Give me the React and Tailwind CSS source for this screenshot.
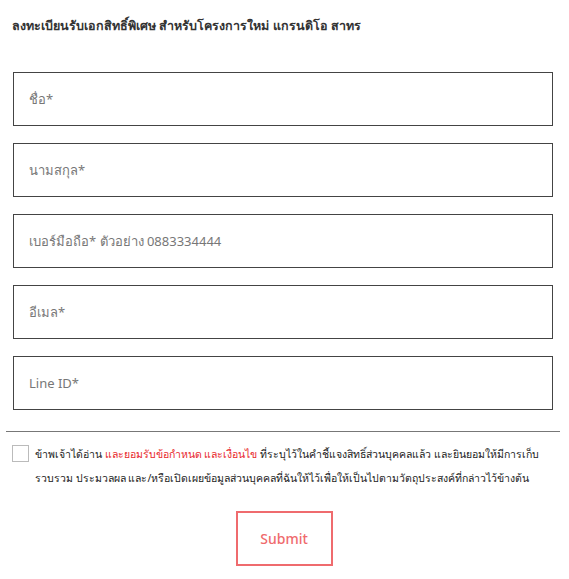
import React, { useState } from "react";

const fields = [
  { name: "firstName", placeholder: "ชื่อ*" },
  { name: "lastName", placeholder: "นามสกุล*" },
  { name: "phone", placeholder: "เบอร์มือถือ* ตัวอย่าง 0883334444" },
  { name: "email", placeholder: "อีเมล*" },
  { name: "lineId", placeholder: "Line ID*" },
];

const App = () => {
  const [values, setValues] = useState({});
  const [accepted, setAccepted] = useState(false);

  const handleChange = (e) =>
    setValues({ ...values, [e.target.name]: e.target.value });

  return (
    <div
      className="w-[569px] bg-white pt-[17px] text-[#333]"
      style={{ fontFamily: '"Noto Sans", "Liberation Sans", sans-serif' }}
    >
      <h1 className="pl-[12px] text-[12.5px] font-bold leading-[18px] text-[#333]">
        ลงทะเบียนรับเอกสิทธิ์พิเศษ สำหรับโครงการใหม่ แกรนดิโอ สาทร
      </h1>

      <form className="mt-[37px]" onSubmit={(e) => e.preventDefault()}>
        <div className="flex flex-col gap-[17px] pl-[13px] pr-[16px]">
          {fields.map((field) => (
            <input
              key={field.name}
              type="text"
              name={field.name}
              value={values[field.name] || ""}
              onChange={handleChange}
              placeholder={field.placeholder}
              className="h-[54px] w-full border border-[#444] px-[15px] text-[13px] text-[#333] placeholder:text-[#777] outline-none"
            />
          ))}
        </div>

        <div className="ml-[6px] mr-[9px] mt-[21px] h-px bg-[#777]" />

        <div className="mt-[12px] flex gap-[6px] pl-[12px] pr-[6px]">
          <button
            type="button"
            onClick={() => setAccepted(!accepted)}
            className="mt-[1px] h-[17px] w-[17px] shrink-0 border border-[#bbb] bg-white text-[11px] leading-none text-[#333]"
          >
            {accepted ? "✓" : ""}
          </button>
          <div className="-mt-[2px] text-[10.5px] leading-[24px] text-[#222]">
            <p className="whitespace-nowrap">
              ข้าพเจ้าได้อ่าน{" "}
              <span className="text-[#e8262b]">และยอมรับข้อกำหนด และเงื่อนไข</span>{" "}
              ที่ระบุไว้ในคำชี้แจงสิทธิ์ส่วนบุคคลแล้ว และยินยอมให้มีการเก็บ
            </p>
            <p className="whitespace-nowrap">
              รวบรวม ประมวลผล และ/หรือเปิดเผยข้อมูลส่วนบุคคลที่ฉันให้ไว้เพื่อให้เป็นไปตามวัตถุประสงค์ที่กล่าวไว้ข้างต้น
            </p>
          </div>
        </div>

        <div className="mt-[21px] flex justify-center pb-[13px]">
          <button
            type="submit"
            className="ml-[-1px] h-[55px] w-[97px] border-2 border-[#ef6b6e] bg-white text-[14px] font-medium text-[#ef6b6e]"
          >
            Submit
          </button>
        </div>
      </form>
    </div>
  );
};

export default App;
